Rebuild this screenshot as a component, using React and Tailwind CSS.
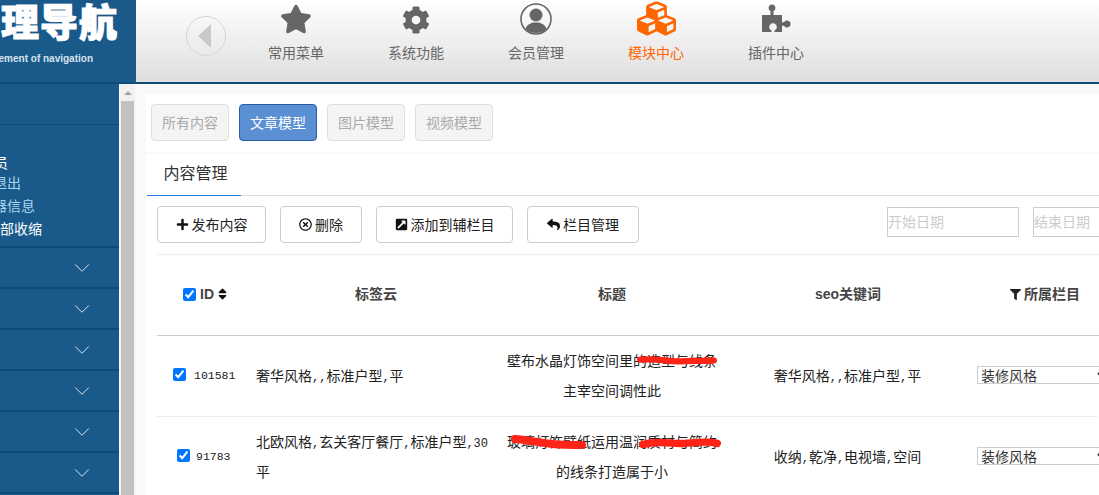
import React from 'react';
import { FaStar, FaCog, FaCubes, FaPlus, FaRegTimesCircle, FaExternalLinkSquareAlt, FaReply, FaFilter, FaSort } from 'react-icons/fa';
import { ChevronDown } from 'lucide-react';

const FONT = "font-['Liberation_Sans','Noto_Sans_CJK_SC',sans-serif]";

function UserRing({ className }) {
    return (
        <svg viewBox="0 0 32 32" className={className}>
            <circle cx="16" cy="16" r="15" fill="none" stroke="currentColor" strokeWidth="1.6" />
            <circle cx="16" cy="12" r="6.5" fill="currentColor" />
            <path d="M5.5 26 C7 21 11 20.5 13 19.5 L19 19.5 C21 20.5 25 21 26.5 26 C23.5 29 20 30 16 30 C12 30 8.500 29 5.500 26Z" fill="currentColor" />
        </svg>
    );
}

function Puzzle({ className }) {
    return (
        <svg viewBox="0 0 30 30" className={className}>
            <path
                d="M1 11 H9.500 V7 A3.400 3.400 0 1 1 12.500 7 V11 H21 V18.300 H23 A3.500 3.500 0 1 1 23 21.700 H21 V28 H13.500 V26.500 A3.800 3.800 0 1 0 10.500 26.500 V28 H1 Z"
                fill="currentColor"
            />
        </svg>
    );
}

const navItems = [
    { label: '常用菜单', Icon: FaStar, size: 'w-8 h-8' },
    { label: '系统功能', Icon: FaCog, size: 'w-7 h-7 mt-0.5' },
    { label: '会员管理', Icon: UserRing, size: 'w-8 h-8' },
    { label: '模块中心', Icon: FaCubes, size: 'w-[39px] h-[39px]' },
    { label: '插件中心', Icon: Puzzle, size: 'w-[30px] h-[30px]' },
];

const filterTabs = [
    { label: '所有内容' },
    { label: '文章模型', active: true },
    { label: '图片模型' },
    { label: '视频模型' },
];

const actions = [
    { label: '发布内容', Icon: FaPlus, width: 'w-[109px]' },
    { label: '删除', Icon: FaRegTimesCircle, width: 'w-[82px]' },
    { label: '添加到辅栏目', Icon: FaExternalLinkSquareAlt, width: 'w-[137px]' },
    { label: '栏目管理', Icon: FaReply, width: 'w-[112px]' },
];

const sideLinks = [
    { label: '会员', offset: '-ml-[20px] h-[18px] leading-[18px]', color: 'text-white' },
    { label: '安全退出', offset: '-ml-[35px] h-[23px]', color: 'text-[#a9d6f2]' },
    { label: '服务器信息', offset: '-ml-[35px] h-[23px]', color: 'text-[#a9d6f2]' },
    { label: '全部收缩', offset: '-ml-[14px] h-[23px]', color: 'text-white' },
];

const COLS = 'grid grid-cols-[88px_262px_210px_261px_160px]';

// commas and digits sit half-width in the table cells
function Mixed({ text }) {
    return text.split(/([,\d]+)/).map((part, i) =>
        i % 2 ? <span key={i} className="font-['Liberation_Mono',monospace] text-xs">{part}</span> : part
    );
}

function Scribble({ className, d }) {
    return (
        <svg viewBox="0 0 80 14" preserveAspectRatio="none" className={`absolute ${className}`}>
            <path d={d} fill="none" stroke="#ff2418" strokeWidth="8" strokeLinecap="round" />
        </svg>
    );
}

function Row({ id, idClass, tags, title, keywords, scribbles }) {
    return (
        <div className={`${COLS} h-[81px] items-center border-b border-dotted border-[#ddd]`}>
            <div className={`flex items-center ${idClass}`}>
                <input type="checkbox" defaultChecked className="m-0 mb-[3px]" />
                <span className="font-['Liberation_Mono',monospace] text-[11.500px] text-[#222]">{id}</span>
            </div>
            <div className="px-[11px] text-sm leading-[30px] text-[#222]"><Mixed text={tags} /></div>
            <div className="relative text-center text-sm leading-[30px] text-[#222]">
                {title.map((line) => <div key={line} className="whitespace-nowrap">{line}</div>)}
                {scribbles}
            </div>
            <div className="text-center text-sm text-[#222]"><Mixed text={keywords} /></div>
            <div className="-ml-px">
                <select className="h-[18px] w-[134px] border border-[#ccc] bg-white pl-0 indent-[-1px] text-sm leading-none text-[#333]">
                    <option>装修风格</option>
                </select>
            </div>
        </div>
    );
}

export default function App() {
    return (
        <div className={`flex h-[495px] w-[1099px] flex-col overflow-hidden bg-[#f9f9f9] ${FONT}`}>
            <header className="flex h-[84px] shrink-0">
                <div className="flex w-[136px] shrink-0 flex-col items-end overflow-hidden border-b-2 border-[#0e4a75] bg-[#1a5a8a] pr-[18px] pt-0.5 text-white">
                    <div className="whitespace-nowrap text-[38px] font-black leading-[42px] tracking-[1px] [-webkit-text-stroke:1px_white]">管理导航</div>
                    <div className="mr-[25px] mt-[9px] whitespace-nowrap text-[10px] font-bold leading-3 text-[#d5e2ec]">Management of navigation</div>
                </div>
                <nav className="flex flex-1 border-b-2 border-[#0e4a75] bg-gradient-to-b from-white to-[#dedede] pl-[50px]">
                    <div className="mt-4 flex h-10 w-10 items-center justify-center rounded-full border border-[#d5d5d5]">
                        <div className="mr-1 h-0 w-0 border-y-[12px] border-r-[13px] border-y-transparent border-r-[#c9c9c9]" />
                    </div>
                    <div className="ml-[10px] flex">
                        {navItems.map(({ label, Icon, size }) => {
                            const active = label === '模块中心';
                            return (
                                <div key={label} className={`flex w-[120px] flex-col items-center ${active ? 'text-[#ff6600]' : 'text-[#666]'}`}>
                                    <div className="flex h-[43px] items-center pb-1.5">
                                        <Icon className={size} />
                                    </div>
                                    <span className="text-sm leading-5">{label}</span>
                                </div>
                            );
                        })}
                    </div>
                </nav>
            </header>

            <div className="flex min-h-0 flex-1">
                <aside className="w-[119px] shrink-0 overflow-hidden bg-[#1a5a8a]">
                    <div className="h-[41px] border-b border-[#0e4a75]" />
                    <div className="flex h-[123px] flex-col border-b-2 border-[#0e4a75] pt-[29px] text-sm leading-[23px]">
                        {sideLinks.map(({ label, offset, color }) => (
                            <div key={label} className={`whitespace-nowrap ${offset} ${color}`}>{label}</div>
                        ))}
                    </div>
                    {[0, 1, 2, 3, 4, 5].map((n) => (
                        <div key={n} className="flex h-[41px] items-center border-b-2 border-[#0e4a75] pl-[69px] text-[#d9e6ef]">
                            <ChevronDown className="h-[26px] w-[26px]" strokeWidth={0.9} />
                        </div>
                    ))}
                </aside>
                <div className="ml-px flex w-[15px] shrink-0 flex-col bg-[#f1f1f1]">
                    <div className="flex h-[17px] items-center justify-center">
                        <div className="h-0 w-0 border-x-4 border-b-4 border-x-transparent border-b-[#a3a3a3]" />
                    </div>
                    <div className="mx-px flex-1 bg-[#c1c1c1]" />
                </div>

                <main className="min-w-0 flex-1 overflow-hidden pl-[11px] pt-[10px]">
                    <div className="flex h-[58px] w-[1000px] gap-[10px] bg-white pl-[5px] pt-[10px]">
                        {filterTabs.map(({ label, active }) => (
                            <div
                                key={label}
                                className={`flex h-[37px] w-[78px] items-center justify-center rounded border text-sm ${active ? 'border-[#2a5e9e] bg-[#5b8fd4] text-white' : 'border-[#ddd] bg-[#f4f4f4] text-[#aaa]'}`}
                            >
                                {label}
                            </div>
                        ))}
                    </div>

                    <section className="mt-0.5 w-[1000px] bg-white pl-px pt-px">
                        <div className="h-[41px] border-b border-[#ddd]">
                            <div className="flex h-[41px] w-[94px] items-center justify-center border-b border-[#2a7be0] pb-[2px] pl-[3px] text-base text-[#333]">内容管理</div>
                        </div>
                        <div className="ml-[10px] mt-[10px] flex h-[49px] border-b border-[#eee]">
                            <div className="flex items-start gap-[14px]">
                                {actions.map(({ label, Icon, width }) => (
                                    <button key={label} className={`flex h-[37px] items-center justify-center gap-[3px] rounded-sm border border-[#ccc] bg-white text-sm text-[#222] ${width}`}>
                                        <Icon className="h-[13px] w-[13px] text-[#111]" />
                                        {label}
                                    </button>
                                ))}
                            </div>
                            <div className="ml-[248px] mt-px flex gap-[14px]">
                                <div className="flex h-[30px] w-[132px] items-center border border-[#ccc] text-sm text-[#ccc]">开始日期</div>
                                <div className="flex h-[30px] w-[132px] items-center border border-[#ccc] text-sm text-[#ccc]">结束日期</div>
                            </div>
                        </div>

                        <div className="ml-[10px]">
                            <div className={`${COLS} h-[81px] items-center border-b border-[#ccc] pb-0.5 text-sm font-bold text-[#444]`}>
                                <div className="flex items-center gap-1 pl-[26px]">
                                    <input type="checkbox" defaultChecked className="m-0" />
                                    <span>ID</span>
                                    <FaSort className="h-[14px] w-[9px] text-[#111]" />
                                </div>
                                <div className="text-center">标签云</div>
                                <div className="text-center">标题</div>
                                <div className="pl-px text-center">seo关键词</div>
                                <div className="flex items-center gap-[3px] pl-[32px]">
                                    <FaFilter className="h-[11px] w-[11px] text-[#222]" />
                                    所属栏目
                                </div>
                            </div>
                            <Row
                                id="101581"
                                idClass="pl-4 gap-2"
                                tags="奢华风格,,标准户型,平"
                                title={['壁布水晶灯饰空间里的造型与线条', '主宰空间调性此']}
                                keywords="奢华风格,,标准户型,平"
                                scribbles={<Scribble className="left-[130px] top-[9px] h-[11px] w-[80px]" d="M4 6 C22 4 30 9 44 8 C56 7 66 8 76 7" />}
                            />
                            <Row
                                id="91783"
                                idClass="pl-5 gap-1.5"
                                tags="北欧风格,玄关客厅餐厅,标准户型,30平"
                                title={['玻璃灯饰壁纸运用温润质材与简约', '的线条打造属于小']}
                                keywords="收纳,乾净,电视墙,空间"
                                scribbles={<>
                                    <Scribble className="left-[4px] top-[8px] h-[14px] w-[75px]" d="M4 4 C20 5 30 8 44 9 C56 10 66 10 76 10" />
                                    <Scribble className="left-[132px] top-[9px] h-[13px] w-[82px]" d="M4 9 C20 4 30 9 44 8 C56 7 66 5 76 8" />
                                </>}
                            />
                        </div>
                    </section>
                </main>
            </div>
        </div>
    );
}
